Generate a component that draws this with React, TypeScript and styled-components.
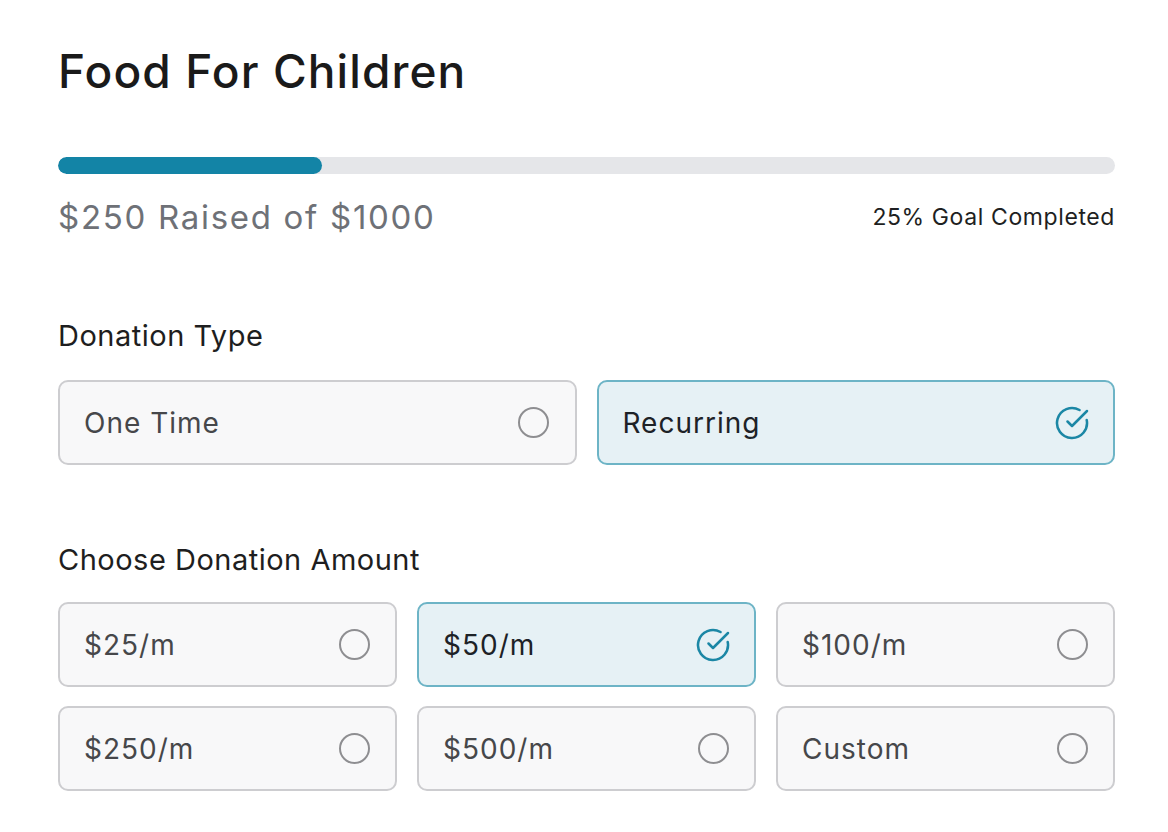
import { useState } from 'react';
import styled, { createGlobalStyle } from 'styled-components';
import { CircleCheckBig } from 'lucide-react';

const GlobalStyle = createGlobalStyle`
  html, body {
    margin: 0;
    padding: 0;
    background: #ffffff;
  }

  body {
    font-family: Inter, 'Noto Sans', 'Liberation Sans', sans-serif;
    color: #1c1c1e;
    -webkit-font-smoothing: antialiased;
  }
`;

const RAISED = 250;
const GOAL = 1000;

const AMOUNTS = ['$25/m', '$50/m', '$100/m', '$250/m', '$500/m', 'Custom'];

interface OptionCardProps {
  label: string;
  selected: boolean;
  onSelect: () => void;
}

function OptionCard({ label, selected, onSelect }: OptionCardProps) {
  return (
    <Card type="button" $selected={selected} onClick={onSelect}>
      <CardLabel $selected={selected}>{label}</CardLabel>
      <Marker>
        {selected ? (
          <CircleCheckBig size={36} strokeWidth={1.7} color="#1b87a5" />
        ) : (
          <EmptyRadio />
        )}
      </Marker>
    </Card>
  );
}

export default function App() {
  const [type, setType] = useState('Recurring');
  const [amount, setAmount] = useState('$50/m');
  const percent = Math.round((RAISED / GOAL) * 100);

  return (
    <>
      <GlobalStyle />
      <Page>
        <Title>Food For Children</Title>

        <Track>
          <Fill style={{ width: `${percent}%` }} />
        </Track>

        <Stats>
          <Raised>
            ${RAISED} Raised of ${GOAL}
          </Raised>
          <Completed>{percent}% Goal Completed</Completed>
        </Stats>

        <Section>
          <Heading>Donation Type</Heading>
          <TypeGrid>
            {['One Time', 'Recurring'].map((t) => (
              <OptionCard key={t} label={t} selected={type === t} onSelect={() => setType(t)} />
            ))}
          </TypeGrid>
        </Section>

        <Section>
          <Heading>Choose Donation Amount</Heading>
          <AmountGrid>
            {AMOUNTS.map((a) => (
              <OptionCard key={a} label={a} selected={amount === a} onSelect={() => setAmount(a)} />
            ))}
          </AmountGrid>
        </Section>
      </Page>
    </>
  );
}

const Page = styled.main`
  width: 1057px;
  padding: 44px 0 0 58px;
  display: flex;
  flex-direction: column;
`;

const Title = styled.h1`
  margin: 0;
  font-size: 46px;
  line-height: 55px;
  font-weight: 500;
  letter-spacing: 1.1px;
  color: #1a1a1a;
`;

const Track = styled.div`
  margin-top: 58px;
  height: 17px;
  border-radius: 9px;
  background: #e5e6e9;
  overflow: hidden;
`;

const Fill = styled.div`
  height: 100%;
  border-radius: 9px;
  background: #1384a6;
`;

const Stats = styled.div`
  margin-top: 23px;
  display: flex;
  align-items: center;
  justify-content: space-between;
`;

const Raised = styled.span`
  font-size: 33px;
  line-height: 40px;
  letter-spacing: 1.7px;
  color: #6e7177;
`;

const Completed = styled.span`
  font-size: 23px;
  line-height: 28px;
  letter-spacing: 0.6px;
  color: #1e1f22;
`;

const Section = styled.section`
  margin-top: 81px;
  display: flex;
  flex-direction: column;
  gap: 27px;

  & + & {
    margin-top: 77px;
    gap: 25px;
  }
`;

const Heading = styled.h2`
  margin: 0;
  font-size: 29px;
  line-height: 35px;
  font-weight: 400;
  letter-spacing: 0.5px;
  color: #1e1e20;
`;

const TypeGrid = styled.div`
  display: grid;
  grid-template-columns: repeat(2, 1fr);
  gap: 20px;
`;

const AmountGrid = styled.div`
  display: grid;
  grid-template-columns: repeat(3, 1fr);
  gap: 19px 20px;
`;

const Card = styled.button<{ $selected: boolean }>`
  height: 85px;
  box-sizing: border-box;
  display: flex;
  align-items: center;
  justify-content: space-between;
  padding: 0 23px 0 24px;
  border-radius: 10px;
  border: 2px solid ${(p) => (p.$selected ? '#6db4c6' : '#cdcdd0')};
  background: ${(p) => (p.$selected ? '#e6f1f5' : '#f8f8f9')};
  font-family: inherit;
  cursor: pointer;
  text-align: left;
`;

const CardLabel = styled.span<{ $selected: boolean }>`
  font-size: 28px;
  line-height: 34px;
  letter-spacing: 1px;
  color: ${(p) => (p.$selected ? '#1d2227' : '#46474a')};
`;

const Marker = styled.span`
  width: 36px;
  height: 36px;
  display: flex;
  align-items: center;
  justify-content: center;
`;

const EmptyRadio = styled.span`
  width: 31px;
  height: 31px;
  box-sizing: border-box;
  border-radius: 50%;
  border: 2px solid #8e8e91;
`;
